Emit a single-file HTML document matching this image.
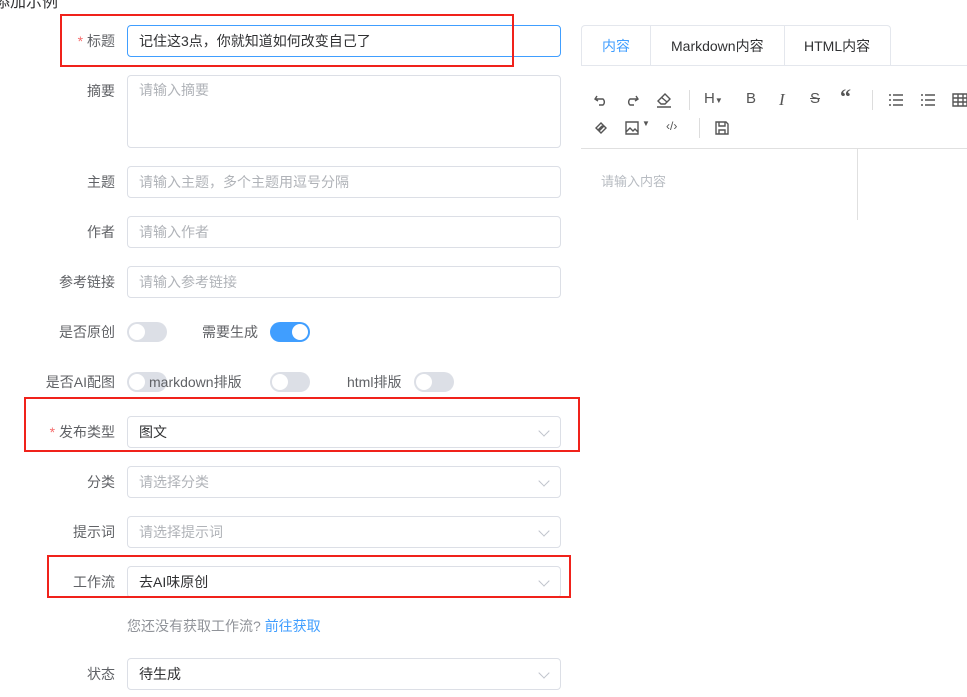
<!DOCTYPE html>
<html><head><meta charset="utf-8"><style>
*{box-sizing:border-box;margin:0;padding:0}
body{width:967px;height:697px;overflow:hidden;background:#fff;font-family:"Liberation Sans","Noto Sans CJK SC",sans-serif;font-size:14px;color:#606266;position:relative}
.a{position:absolute}
.lbl{position:absolute;right:852px;text-align:right;white-space:nowrap;color:#606266}
.req::before{content:"* ";color:#f56c6c}
.in{position:absolute;left:127px;width:434px;height:32px;border:1px solid #dcdfe6;border-radius:4px;padding:0 11px;line-height:30px;color:#606266}
.ph{color:#b0b3b8}
.arr{position:absolute;right:12px;top:10px;width:8px;height:8px;border-right:1px solid #c0c4cc;border-bottom:1px solid #c0c4cc;transform:rotate(45deg)}
.sw{position:absolute;width:40px;height:20px;border-radius:10px;background:#dcdfe6}
.sw::after{content:"";position:absolute;left:2px;top:2px;width:16px;height:16px;border-radius:50%;background:#fff}
.sw.on{background:#409eff}.sw.on::after{left:22px}
.red{position:absolute;border:2px solid #f0221b}
.tb{position:absolute;color:#555;font-size:15px}
svg.i{position:absolute;stroke:#555;fill:none;stroke-width:1.4}
</style></head><body>
<div class="a" style="left:-6px;top:-12px;font-size:16px;color:#303133">添加示例</div>

<div class="lbl req" style="top:31px">标题</div>
<div class="in" style="top:25px;border-color:#409eff;color:#303133">记住这3点，你就知道如何改变自己了</div>
<div class="lbl" style="top:81px">摘要</div>
<div class="in ph" style="top:75px;height:73px;line-height:28px">请输入摘要</div>
<div class="lbl" style="top:172px">主题</div>
<div class="in ph" style="top:166px">请输入主题，多个主题用逗号分隔</div>
<div class="lbl" style="top:222px">作者</div>
<div class="in ph" style="top:216px">请输入作者</div>
<div class="lbl" style="top:272px">参考链接</div>
<div class="in ph" style="top:266px">请输入参考链接</div>

<div class="lbl" style="top:322px">是否原创</div>
<div class="sw" style="left:127px;top:322px"></div>
<div class="a" style="left:202px;top:322px">需要生成</div>
<div class="sw on" style="left:270px;top:322px"></div>

<div class="lbl" style="top:372px">是否AI配图</div>
<div class="sw" style="left:127px;top:372px"></div>
<div class="a" style="left:149px;top:372px">markdown排版</div>
<div class="sw" style="left:270px;top:372px"></div>
<div class="a" style="left:347px;top:372px">html排版</div>
<div class="sw" style="left:414px;top:372px"></div>

<div class="lbl req" style="top:422px">发布类型</div>
<div class="in" style="top:416px;color:#303133">图文<span class="arr"></span></div>
<div class="lbl" style="top:472px">分类</div>
<div class="in ph" style="top:466px">请选择分类<span class="arr"></span></div>
<div class="lbl" style="top:522px">提示词</div>
<div class="in ph" style="top:516px">请选择提示词<span class="arr"></span></div>
<div class="lbl" style="top:572px">工作流</div>
<div class="in" style="top:566px;color:#303133">去AI味原创<span class="arr"></span></div>
<div class="a" style="left:127px;top:616px;color:#909399">您还没有获取工作流? <span style="color:#409eff">前往获取</span></div>
<div class="lbl" style="top:664px">状态</div>
<div class="in" style="top:658px;color:#303133">待生成<span class="arr"></span></div>

<div class="red" style="left:60px;top:14px;width:454px;height:53px"></div>
<div class="red" style="left:24px;top:397px;width:556px;height:55px"></div>
<div class="red" style="left:47px;top:555px;width:524px;height:43px"></div>

<!-- right -->
<div class="a" style="left:581px;top:25px;width:310px;height:41px;border:1px solid #e4e7ed;border-bottom:none;border-radius:4px 4px 0 0"></div>
<div class="a" style="left:581px;top:65px;width:386px;border-top:1px solid #e4e7ed"></div>
<div class="a" style="left:650px;top:25px;height:40px;border-left:1px solid #e4e7ed"></div>
<div class="a" style="left:784px;top:25px;height:40px;border-left:1px solid #e4e7ed"></div>
<div class="a" style="left:602px;top:36px;color:#409eff">内容</div>
<div class="a" style="left:671px;top:36px;color:#303133">Markdown内容</div>
<div class="a" style="left:804px;top:36px;color:#303133">HTML内容</div>

<svg class="i" style="left:593px;top:92px" width="16" height="16"><path d="M4 4 L2 7 L5 9 M2 7 H10 A4 4 0 0 1 10 13 H6"/></svg>
<svg class="i" style="left:624px;top:92px" width="16" height="16"><path d="M12 4 L14 7 L11 9 M14 7 H6 A4 4 0 0 0 6 13 H10"/></svg>
<svg class="i" style="left:655px;top:91px" width="18" height="18"><path d="M3 10 L10 3 L15 8 L10 13 H6 Z M6 6 L12 11 M2 16 H16"/></svg>
<div class="a" style="left:689px;top:90px;height:20px;border-left:1px solid #ddd"></div>
<div class="tb" style="left:704px;top:90px">H<span style="font-size:8px">▼</span></div>
<div class="tb" style="left:746px;top:90px">B</div>
<div class="tb" style="left:779px;top:90px;font-family:'Liberation Serif';font-style:italic;font-size:17px">I</div>
<div class="tb" style="left:810px;top:90px;text-decoration:line-through">S</div>
<div class="tb" style="left:840px;top:84px;font-weight:bold;font-size:22px;font-family:'Liberation Serif'">“</div>
<div class="a" style="left:872px;top:90px;height:20px;border-left:1px solid #ddd"></div>
<svg class="i" style="left:888px;top:92px" width="16" height="16"><path d="M1 3h2M1 8h2M1 13h2M5 3h10M5 8h10M5 13h10"/></svg>
<svg class="i" style="left:920px;top:92px" width="16" height="16"><path d="M1 3h2M1 8h2M1 13h2M5 3h10M5 8h10M5 13h10"/></svg>
<svg class="i" style="left:952px;top:92px" width="16" height="16"><path d="M1 2h14v12H1zM1 6h14M1 10h14M6 2v12M11 2v12"/></svg>
<svg class="i" style="left:594px;top:121px" width="14" height="14"><path d="M2 7 L7 2 L9 4 L4 9 Z M5 10 L10 5 L12 7 L7 12 Z"/></svg>
<svg class="i" style="left:625px;top:121px" width="14" height="14"><path d="M1 1h12v12H1z M1 11 L5 7 L8 10 L10 8 L13 11"/></svg>
<div class="tb" style="left:642px;top:119px;font-size:8px">▼</div>
<div class="tb" style="left:666px;top:119px;font-size:12px">‹/›</div>
<div class="a" style="left:699px;top:118px;height:20px;border-left:1px solid #ddd"></div>
<svg class="i" style="left:715px;top:121px" width="14" height="14"><path d="M1 1h10l2 2v10H1z M4 1v4h6V1 M4 13V9h6v4"/></svg>
<div class="a" style="left:581px;top:148px;width:386px;border-top:1px solid #e0e0e0"></div>
<div class="a" style="left:857px;top:148px;height:72px;border-left:1px solid #e0e0e0"></div>
<div class="a" style="left:601px;top:171px;color:#b8bcc2;font-size:13px">请输入内容</div>
</body></html>
